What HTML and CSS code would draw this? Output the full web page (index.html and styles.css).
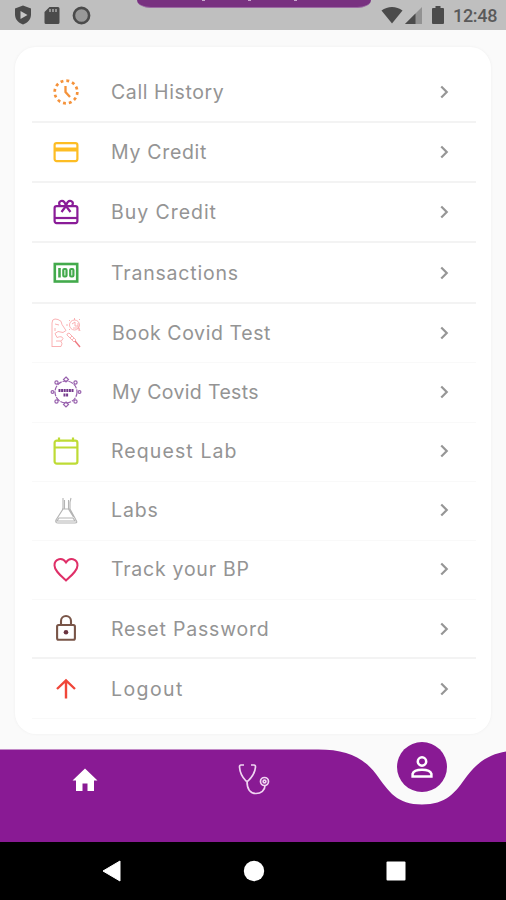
FILE: index.html
```html
<!DOCTYPE html>
<html lang="en">
<head>
    <meta charset="UTF-8">
    <meta name="viewport" content="width=device-width, initial-scale=1.0">
    <title>My Account</title>
    <link rel="stylesheet" href="styles.css">
</head>
<body>
    <svg class="defs" width="0" height="0">
        <symbol id="chevron" viewBox="0 0 24 24"><path d="M9 6l6 6-6 6"/></symbol>
    </svg>

    <div class="status-bar">
        <div class="status-icons">
            <svg width="18" height="20" viewBox="0 0 18 20"><path d="M9 .5l8 3v6c0 5-3.500 8.500-8 10-4.500-1.500-8-5-8-10v-6z" fill="#4b4b4b"/><path d="M6.500 6v8l7-4z" fill="#c8c8c8"/></svg>
            <svg width="16" height="19" viewBox="0 0 16 19"><path d="M5.500 1H14a1.500 1.500 0 0 1 1.500 1.500v14A1.500 1.500 0 0 1 14 18H2a1.500 1.500 0 0 1-1.500-1.500V6z" fill="#4b4b4b"/><path d="M6 3v3M9 3v3M12 3v3" stroke="#aaa" stroke-width="1.500"/></svg>
            <svg width="19" height="19" viewBox="0 0 19 19"><circle cx="9.500" cy="9.500" r="7.600" fill="#989898" stroke="#4b4b4b" stroke-width="2.600"/></svg>
        </div>
        <div class="status-icons right">
            <svg class="wifi" width="22" height="18" viewBox="0 0 22 18"><path d="M.5 4.500C6.500-.2 15.500-.2 21.500 4.500L11 17.500z" fill="#4b4b4b"/></svg>
            <svg class="signal" width="17" height="17" viewBox="0 0 17 17"><path d="M17 0v17H0z" fill="#929292"/><path d="M10.500 6.500V17H0z" fill="#4b4b4b"/></svg>
            <svg class="battery" width="12" height="18" viewBox="0 0 12 18"><path d="M3.500 0h5v2H11a1 1 0 0 1 1 1v14a1 1 0 0 1-1 1H1a1 1 0 0 1-1-1V3a1 1 0 0 1 1-1h2.500z" fill="#4b4b4b"/></svg>
            <span class="clock">12:48</span>
        </div>
        <div class="banner"><i></i><i></i><i></i></div>
    </div>

    <main class="content">
        <ul class="menu">
            <li class="item tall strong">
                <svg class="icon" viewBox="0 0 28 28" fill="none" stroke="#f5923a"><circle cx="14" cy="14" r="11.300" stroke-width="2.700" stroke-dasharray="2.900 3.017"/><path d="M13.500 8v6l4.500 5" stroke-width="2.300"/></svg>
                <span class="label history">Call History</span>
                <svg class="chevron"><use href="#chevron"/></svg>
            </li>
            <li class="item strong">
                <svg class="icon" viewBox="0 0 28 28" fill="none" stroke="#fdbd24" stroke-width="2.200"><rect x="2.600" y="5.100" width="22.800" height="18" rx="2"/><path d="M2.500 11.500h23" stroke-width="4"/></svg>
                <span class="label credit">My Credit</span>
                <svg class="chevron"><use href="#chevron"/></svg>
            </li>
            <li class="item strong">
                <svg class="icon" viewBox="0 0 28 28" fill="none" stroke="#8a1c98" stroke-width="2.200"><rect x="2.600" y="8.100" width="22.800" height="17" rx="2"/><path d="M2.500 20h23"/><path d="M14 8c-1-4-3-5.500-5-5-3 1-2 5 .5 5H14c1-4 3-5.500 5-5 3 1 2 5-.5 5H14M14 8l-4.500 6M14 8l4.500 6"/></svg>
                <span class="label buy">Buy Credit</span>
                <svg class="chevron"><use href="#chevron"/></svg>
            </li>
            <li class="item tall strong">
                <svg class="icon" viewBox="0 0 28 28" fill="none" stroke="#43aa4c" stroke-width="2.600"><rect x="2.800" y="5" width="22.400" height="17.500"/><path d="M7.500 9v9.500" stroke-width="2.600"/><rect x="11.300" y="10" width="3.200" height="7.500" rx="1" stroke-width="2.200"/><rect x="18.200" y="10" width="3.200" height="7.500" rx="1" stroke-width="2.200"/></svg>
                <span class="label transactions">Transactions</span>
                <svg class="chevron"><use href="#chevron"/></svg>
            </li>
            <li class="item short">
                <svg class="icon big" viewBox="0 0 32 32" fill="none" stroke="#f9a9ab" stroke-width=".9"><path d="M2 30V6q0-4 3-4l3 .5q4 1 4 5l4 6-3 2-5-1-3 2 2 4q5-2 6 1l-2 3q2 2 0 5H2M5 7l4 1M6 24h5M5 11v3"/><circle cx="24.500" cy="8" r="5"/><path d="M24.500 1v2M18 8h-2M29 3l1-1M20 4l-1-1M20 12l-1 1M22 7l3-2v4h3V6M23 11h6v3M28 9l2 5"/><path d="M17 17l2-1 7 7-2 2-7-7zM20 21l2-2M22 23l2-2"/><path d="M25 24l5 6" stroke="#ee7a82" stroke-width="1.400"/></svg>
                <span class="label book">Book Covid Test</span>
                <svg class="chevron"><use href="#chevron"/></svg>
            </li>
            <li class="item raised">
                <svg class="icon big" viewBox="0 0 32 32" fill="none" stroke="#9861ad" stroke-width="1.200"><circle cx="16" cy="16" r="11" stroke-dasharray="5 1"/><path d="M16 1l2.500 2.500L16 6l-2.500-2.500zM16 26l2.500 2.500L16 31l-2.500-2.500z"/><circle cx="2.500" cy="16" r="1.400"/><circle cx="29.500" cy="16" r="1.400"/><circle cx="6.500" cy="6.500" r="1.600"/><circle cx="25.500" cy="6.500" r="1.600"/><circle cx="6.500" cy="25.500" r="1.600"/><circle cx="25.500" cy="25.500" r="1.600"/><path d="M8.500 14.500h15" stroke="#74398c" stroke-width="3" stroke-dasharray="2 .6"/><path d="M13.500 19h5" stroke="#74398c" stroke-width="3" stroke-dasharray="2 .6"/></svg>
                <span class="label tests">My Covid Tests</span>
                <svg class="chevron"><use href="#chevron"/></svg>
            </li>
            <li class="item short raised">
                <svg class="icon" viewBox="0 0 28 28" fill="none" stroke="#bedb35" stroke-width="2.200"><rect x="2.600" y="3.600" width="22.800" height="23" rx="2.200"/><path d="M2.500 10.500h23M7 .5v4M21 .5v4"/></svg>
                <span class="label request">Request Lab</span>
                <svg class="chevron"><use href="#chevron"/></svg>
            </li>
            <li class="item short raised">
                <svg class="icon" viewBox="0 0 28 28" fill="none" stroke="#b4b4b4" stroke-width="1.100"><path d="M11 2v11L4 24q-1 3 2 3h17q3 0 1-3l-6-11V6l1-4M12.500 4v9M16.500 4v9l5 8M10 13h8M7 22h14l2 3H5z"/></svg>
                <span class="label labs">Labs</span>
                <svg class="chevron"><use href="#chevron"/></svg>
            </li>
            <li class="item short raised">
                <svg class="icon" viewBox="0 0 28 28" fill="none" stroke="#df2f68" stroke-width="2"><path d="M14 25.500C8 20 2.500 15.500 2.500 10.500c0-7 8-8.500 11.500-3 3.500-5.500 11.500-4 11.500 3 0 5-5.500 9.500-11.500 15z"/></svg>
                <span class="label track">Track your BP</span>
                <svg class="chevron"><use href="#chevron"/></svg>
            </li>
            <li class="item short strong">
                <svg class="icon" viewBox="0 0 28 28" fill="none" stroke="#795548" stroke-width="2.100"><rect x="5.100" y="10" width="17.800" height="14.800" rx="1.500"/><path d="M9 10V6a5 5 0 0 1 10 0v4"/><circle cx="14" cy="17.300" r="2.300" fill="#6b3440" stroke="none"/></svg>
                <span class="label reset">Reset Password</span>
                <svg class="chevron"><use href="#chevron"/></svg>
            </li>
            <li class="item">
                <svg class="icon" viewBox="0 0 28 28" fill="none" stroke="#f04639" stroke-width="2.400"><path d="M14 23.500V6M5 14L14 5.500l9 8.500"/></svg>
                <span class="label logout">Logout</span>
                <svg class="chevron"><use href="#chevron"/></svg>
            </li>
        </ul>
    </main>

    <nav class="tab-bar">
        <svg class="wave" viewBox="0 0 506 93"><path d="M0 .5H318C346 .5 363 8 376 25C389 43 397 55.500 422 55.500C446 55.500 455 44 467 27C478 12 491 5 506 2.500V93H0z" fill="#891a94"/></svg>
        <svg class="home" viewBox="0 0 26 24"><path d="M13 .5L.5 12.500H4V23h6.500v-7.500h5V23H22V12.500h3.500z" fill="#fff"/></svg>
        <svg class="stethoscope" viewBox="0 0 32 32" fill="none" stroke="#f0d5f2" stroke-width="1.700"><path d="M6 2H3q-1.500 0-1.500 2C2 11 5 15 8 18h2c3-3 7-7 7.500-14q0-2-1.500-2h-3M9 18c0 8 3 12.500 9 12.500 5 0 9-3 9-8"/><circle cx="26.500" cy="18.500" r="4"/><circle cx="26.500" cy="18.500" r="1.400"/></svg>
        <div class="profile">
            <svg width="24" height="24" viewBox="0 0 24 24" fill="none" stroke="#fff" stroke-width="2.500"><circle cx="12" cy="6.500" r="4.200"/><path d="M2.600 21.400v-2.600C3.500 16 8 14.800 12 14.800s8.500 1.200 9.400 4v2.600z"/></svg>
        </div>
    </nav>

    <div class="system-nav">
        <svg viewBox="0 0 20 22"><path d="M18 1v20L1 11z" fill="#fff" stroke="#fff" stroke-linejoin="round"/></svg>
        <svg viewBox="0 0 20 22"><circle cx="10" cy="11" r="10.200" fill="#fff"/></svg>
        <svg viewBox="0 0 20 22"><rect x=".5" y="1.500" width="19" height="19" rx="1" fill="#fff"/></svg>
    </div>
</body>
</html>
```

FILE: styles.css
```css
* {
    box-sizing: border-box;
    margin: 0;
    padding: 0;
}

body {
    width: 506px;
    height: 900px;
    overflow: hidden;
    display: flex;
    flex-direction: column;
    background: #fafafa;
    font-family: Inter, "Open Sans", sans-serif;
}

.defs {
    position: absolute;
}

svg {
    display: block;
    flex-shrink: 0;
    overflow: visible;
}

/* Status bar */
.status-bar {
    position: relative;
    height: 30px;
    flex-shrink: 0;
    display: flex;
    justify-content: space-between;
    background: #bfbfbf;
    padding: 0 9px 0 14px;
}

.status-icons {
    display: flex;
    align-items: center;
    gap: 12px;
}

.status-icons.right {
    gap: 0;
}

.signal {
    margin-left: 2px;
}

.battery {
    margin: 0 9px 0 10px;
}

.clock {
    font-family: Roboto, sans-serif;
    font-size: 18px;
    font-weight: 500;
    line-height: 30px;
    padding-top: 2px;
    color: #5a5a5a;
    width: 44px;
    letter-spacing: -0.3px;
}

/* Toast sliding off the top edge */
.banner {
    position: absolute;
    left: 137px;
    top: 0;
    width: 234px;
    height: 8px;
    display: flex;
    padding-left: 65px;
    gap: 43px;
    background: #783180;
    border-bottom: 1px solid #9b6aa3;
    border-radius: 0 0 14px 14px / 0 0 8px 8px;
}

.banner i {
    width: 3px;
    height: 1px;
    background: #c9a6ce;
}

/* Menu card */
.content {
    height: 719px;
    flex-shrink: 0;
    padding: 17px 15px 15px;
}

.menu {
    list-style: none;
    height: 687px;
    padding: 15px 15px 0 17px;
    background: #fff;
    border-radius: 21px;
    box-shadow: 0 0 2px 1px #f4f4f4;
}

.item {
    display: flex;
    align-items: center;
    height: 60px;
    padding: 0 21px 0 17px;
    border-bottom: 1px solid #f9f9f9;
}

.item.tall {
    height: 61px;
}

.item.short {
    height: 59px;
}

.item.raised {
    padding-bottom: 2px;
}

.item.strong {
    border-bottom: 2px solid #f3f3f3;
}

.icon {
    width: 28px;
    height: 28px;
    margin: 0 31px 0 3px;
}

.icon.big {
    width: 32px;
    height: 32px;
    margin: 0 29px 0 1px;
}

.label {
    flex: 1;
    font-size: 19.5px;
    line-height: 26px;
    white-space: nowrap;
    color: #949494;
}

.history {
    letter-spacing: 0.6px;
}

.credit {
    letter-spacing: 0.7px;
}

.buy {
    letter-spacing: 0.95px;
}

.transactions {
    letter-spacing: 0.8px;
}

.book {
    letter-spacing: 0.6px;
    padding-left: 1px;
}

.tests {
    letter-spacing: 0.35px;
    padding-left: 1px;
}

.request {
    letter-spacing: 1.1px;
}

.labs {
    letter-spacing: 0.9px;
}

.track {
    letter-spacing: 0.75px;
}

.reset {
    letter-spacing: 0.8px;
}

.logout {
    letter-spacing: 1.4px;
}

.chevron {
    width: 22px;
    height: 22px;
    fill: none;
    stroke: #969696;
    stroke-width: 2.4;
}

/* Bottom tabs */
.tab-bar {
    position: relative;
    height: 93px;
    flex-shrink: 0;
    display: flex;
    padding: 0 0 0 72px;
}

.wave {
    position: absolute;
    inset: 0;
    width: 506px;
    height: 93px;
}

.home {
    position: relative;
    width: 26px;
    height: 24px;
    margin-top: 19px;
}

.stethoscope {
    position: relative;
    width: 32px;
    height: 32px;
    margin: 14px 0 0 140px;
}

.profile {
    position: absolute;
    left: 397px;
    top: -7px;
    width: 50px;
    height: 50px;
    display: flex;
    align-items: center;
    justify-content: center;
    background: #891a94;
    border-radius: 50%;
}

/* Android buttons */
.system-nav {
    height: 58px;
    flex-shrink: 0;
    display: flex;
    align-items: center;
    justify-content: center;
    gap: 122px;
    padding-left: 1px;
    background: #000;
}

.system-nav svg {
    width: 20px;
    height: 22px;
}
```
